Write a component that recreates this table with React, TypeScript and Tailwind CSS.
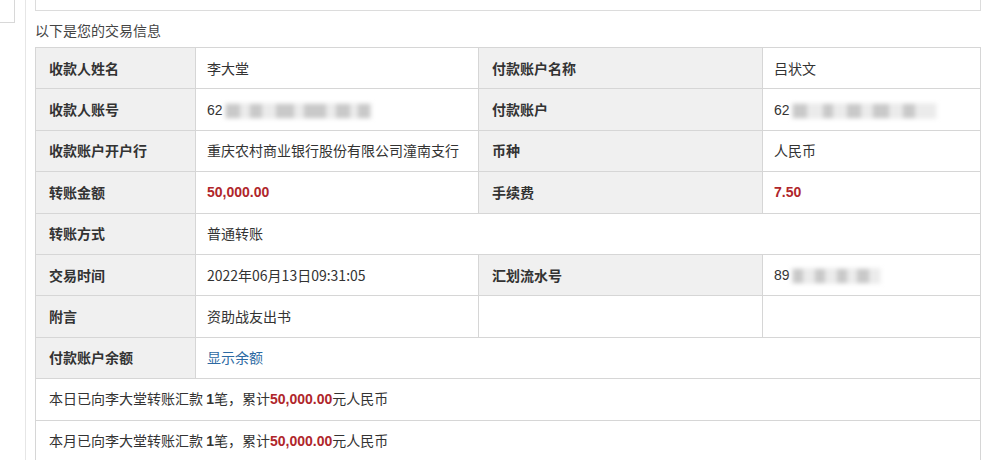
import React from "react";

const font = { fontFamily: '"Noto Sans CJK SC", "Liberation Sans", sans-serif' };
const num = { fontFamily: '"Liberation Sans", "Noto Sans CJK SC", sans-serif' };

const Blur = ({ widths }: { widths: number[] }) => (
    <span className="inline-flex items-center ml-[1px] blur-[2px] align-middle bg-[#f1f1f1] h-[16px] px-[2px]">
        {widths.map((w, i) => (
            <span
                key={i}
                className={i % 2 === 0 ? "h-[14px] bg-[#c9c9c9]" : "h-[14px] bg-[#ebebeb]"}
                style={{ width: w }}
            />
        ))}
    </span>
);

const Label = ({ children, span }: { children?: React.ReactNode; span?: number }) => (
    <td
        colSpan={span}
        className="border border-[#d6d6d6] bg-[#f0f0f0] pl-[13px] font-bold text-[#333] text-[14px]"
    >
        {children}
    </td>
);

const Value = ({ children, span }: { children?: React.ReactNode; span?: number }) => (
    <td
        colSpan={span}
        className="border border-[#d6d6d6] bg-white pl-[11px] text-[#333] text-[14px]"
    >
        {children}
    </td>
);

const Red = ({ children }: { children: React.ReactNode }) => (
    <span className="font-bold text-[#b0262b] text-[14px]" style={num}>
        {children}
    </span>
);

export default function App() {
    return (
        <div className="flex w-[990px] h-[460px] overflow-hidden bg-white" style={font}>
            <div className="w-[26px] flex-none border-r border-[#e6e6e6]">
                <div className="w-[15px] h-[23px] border-r border-b border-[#d8d8d8]" />
            </div>
            <div className="w-[9px] flex-none" />
            <main className="flex-none w-[946px]">
                <div className="h-[11px] border-l border-r border-b border-[#dcdcdc]" />
                <h3 className="h-[36px] pt-[9px] text-[14px] leading-[20px] text-[#444]">
                    以下是您的交易信息
                </h3>
                <table className="border-collapse w-[945px] table-fixed">
                    <colgroup>
                        <col className="w-[160px]" />
                        <col className="w-[283px]" />
                        <col className="w-[284px]" />
                        <col className="w-[218px]" />
                    </colgroup>
                    <tbody className="[&>tr]:h-[41.4px]">
                        <tr>
                            <Label>收款人姓名</Label>
                            <Value>李大堂</Value>
                            <Label>付款账户名称</Label>
                            <Value>吕状文</Value>
                        </tr>
                        <tr>
                            <Label>收款人账号</Label>
                            <Value>
                                <span style={num}>62</span>
                                <Blur widths={[14, 10, 12, 14, 18, 10, 22, 10, 14, 8, 12]} />
                            </Value>
                            <Label>付款账户</Label>
                            <Value>
                                <span style={num}>62</span>
                                <Blur widths={[14, 16, 10, 14, 14, 12, 16, 14, 12, 20]} />
                            </Value>
                        </tr>
                        <tr>
                            <Label>收款账户开户行</Label>
                            <Value>重庆农村商业银行股份有限公司潼南支行</Value>
                            <Label>币种</Label>
                            <Value>人民币</Value>
                        </tr>
                        <tr>
                            <Label>转账金额</Label>
                            <Value>
                                <Red>50,000.00</Red>
                            </Value>
                            <Label>手续费</Label>
                            <Value>
                                <Red>7.50</Red>
                            </Value>
                        </tr>
                        <tr>
                            <Label>转账方式</Label>
                            <Value span={3}>普通转账</Value>
                        </tr>
                        <tr>
                            <Label>交易时间</Label>
                            <Value>2022年06月13日09:31:05</Value>
                            <Label>汇划流水号</Label>
                            <Value>
                                <span style={num}>89</span>
                                <Blur widths={[10, 12, 10, 12, 10, 10, 12, 10]} />
                            </Value>
                        </tr>
                        <tr>
                            <Label>附言</Label>
                            <Value>资助战友出书</Value>
                            <Value />
                            <Value />
                        </tr>
                        <tr>
                            <Label>付款账户余额</Label>
                            <Value span={3}>
                                <span className="text-[#2d6aa3]">显示余额</span>
                            </Value>
                        </tr>
                        <tr>
                            <td colSpan={4} className="border border-[#d6d6d6] pl-[13px] text-[14px] text-[#333]">
                                本日已向李大堂转账汇款 <b style={num}>1</b>笔，累计<Red>50,000.00</Red>元人民币
                            </td>
                        </tr>
                        <tr>
                            <td colSpan={4} className="border border-[#d6d6d6] pl-[13px] text-[14px] text-[#333]">
                                本月已向李大堂转账汇款 <b style={num}>1</b>笔，累计<Red>50,000.00</Red>元人民币
                            </td>
                        </tr>
                    </tbody>
                </table>
            </main>
        </div>
    );
}
